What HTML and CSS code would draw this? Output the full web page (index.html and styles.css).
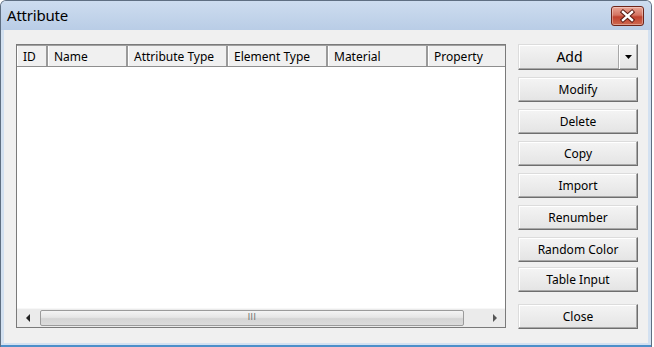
FILE: index.html
```html
<!DOCTYPE html>
<html>
<head>
<meta charset="utf-8">
<link rel="stylesheet" href="styles.css">
</head>
<body>
<div class="window">
  <div class="titlebar">
    <span class="title">Attribute</span>
    <div class="close-x">
      <svg width="33" height="20" viewBox="0 0 33 20">
        <path d="M12 6 L21 14 M21 6 L12 14" stroke="#5a1a12" stroke-width="4.4" stroke-linecap="square"/>
        <path d="M12 6 L21 14 M21 6 L12 14" stroke="#ffffff" stroke-width="2.4" stroke-linecap="square"/>
      </svg>
    </div>
  </div>
  <div class="frame">
    <div class="client">
      <div class="listview">
        <div class="header">
          <div class="hcell c-id">ID</div>
          <div class="hcell c-name">Name</div>
          <div class="hcell c-wide">Attribute Type</div>
          <div class="hcell c-wide">Element Type</div>
          <div class="hcell c-wide">Material</div>
          <div class="hcell c-last">Property</div>
        </div>
        <div class="body"></div>
        <div class="hscroll">
          <div class="arrow">
            <svg width="5" height="8" viewBox="0 0 5 8"><path d="M4 0 L0 4 L4 8 Z" fill="#222"/></svg>
          </div>
          <div class="track">
            <div class="thumb"><span class="grip">III</span></div>
          </div>
          <div class="arrow">
            <svg width="5" height="8" viewBox="0 0 5 8"><path d="M1 0 L5 4 L1 8 Z" fill="#555"/></svg>
          </div>
        </div>
      </div>
      <div class="buttons">
        <div class="btn split">
          <span class="split-main">Add</span>
          <span class="split-arrow"><svg width="7" height="4" viewBox="0 0 7 4"><path d="M0 0 L7 0 L3.5 4 Z" fill="#000"/></svg></span>
        </div>
        <div class="btn">Modify</div>
        <div class="btn">Delete</div>
        <div class="btn">Copy</div>
        <div class="btn">Import</div>
        <div class="btn">Renumber</div>
        <div class="btn">Random Color</div>
        <div class="btn btn-last">Table Input</div>
        <div class="btn btn-close">Close</div>
      </div>
    </div>
  </div>
</div>
</body>
</html>
```
FILE: styles.css
```css
* { box-sizing: border-box; }
html, body {
  margin: 0;
  padding: 0;
  background: #ffffff;
}
body {
  font-family: "Noto Sans", "Open Sans", sans-serif;
  font-size: 12px;
  color: #000;
}
.window {
  width: 652px;
  height: 347px;
  display: flex;
  flex-direction: column;
  border: 1px solid #5f6f82;
  border-bottom: none;
  border-radius: 6px 6px 0 0;
  background: #c9daee;
  overflow: hidden;
}
.titlebar {
  height: 29px;
  flex: none;
  display: flex;
  align-items: center;
  justify-content: space-between;
  padding: 0 7px 2px 6px;
  background: linear-gradient(#cddcef, #b9cde6);
}
.title {
  font-size: 15px;
  color: #000;
  letter-spacing: -0.2px;
}
.close-x {
  width: 33px;
  height: 20px;
  margin-top: 2px;
  border: 1px solid #6e2418;
  border-radius: 3px;
  background: linear-gradient(#e9a595 0%, #d47462 45%, #c0412e 55%, #cf6a50 100%);
  box-shadow: inset 0 0 0 1px rgba(255,255,255,0.35);
  display: flex;
  align-items: center;
  justify-content: center;
}
.close-x svg { display: block; margin: -1px; }
.frame {
  flex: 1;
  display: flex;
  padding: 0 3px 2px 3px;
  background: #d3e1f1;
  border-bottom: 2px solid #4d8fc9;
}
.client {
  flex: 1;
  display: flex;
  align-items: flex-start;
  gap: 12px;
  padding: 14px 9px 0 12px;
  background: #f0f0f0;
}
.listview {
  width: 490px;
  height: 284px;
  display: flex;
  flex-direction: column;
  border: 1px solid #7a7a7a;
  background: #ffffff;
}
.header {
  height: 22px;
  flex: none;
  display: flex;
  background: #f0f0f0;
  border-top: 1px solid #a0a0a0;
  border-bottom: 1px solid #8e8e8e;
}
.hcell {
  display: flex;
  align-items: center;
  padding-left: 5px;
  padding-top: 1px;
  border-left: 1px solid #ffffff;
  border-right: 2px solid #9a9a9a;
  white-space: nowrap;
  line-height: 1;
}
.c-id { width: 31px; }
.c-name { width: 80px; }
.c-wide { width: 100px; }
.c-last { flex: 1; border-right: none; }
.body {
  flex: 1;
  background: #ffffff;
}
.hscroll {
  height: 19px;
  flex: none;
  display: flex;
  align-items: stretch;
  background: #ebebeb;
  border-top: 1px solid #f7f7f7;
}
.arrow {
  width: 22px;
  display: flex;
  align-items: center;
  justify-content: center;
}
.track {
  flex: 1;
  display: flex;
  padding: 1px 0;
}
.thumb {
  width: 424px;
  margin-left: 1px;
  border: 1px solid #9b9b9b;
  border-radius: 2px;
  background: linear-gradient(#f4f4f4 0%, #e6e6e6 45%, #d4d4d4 55%, #dcdcdc 100%);
  display: flex;
  align-items: center;
  justify-content: center;
}
.grip {
  font-family: "DejaVu Sans", sans-serif;
  font-size: 8px;
  color: #6a6a6a;
  letter-spacing: 0.5px;
  line-height: 1;
}
.buttons {
  width: 120px;
  height: 285px;
  display: flex;
  flex-direction: column;
  gap: 7px;
}
.btn {
  height: 25px;
  flex: none;
  display: flex;
  align-items: center;
  justify-content: center;
  padding-bottom: 1px;
  border: 1px solid;
  border-color: #dcdcdc #6e6e6e #6e6e6e #dcdcdc;
  box-shadow: inset -1px -1px 0 #a8a8a8, inset 1px 1px 0 #ffffff;
  background: linear-gradient(#f4f4f4, #e4e4e4);
  white-space: nowrap;
}
.btn-last {
  margin-top: -2px;
}
.btn-close {
  margin-top: auto;
}
.split {
  height: 26px;
  justify-content: stretch;
  padding: 0;
}
.split-main {
  flex: 1;
  text-align: center;
  font-size: 14px;
  padding-left: 2px;
  padding-bottom: 1px;
}
.split-arrow {
  width: 19px;
  align-self: stretch;
  display: flex;
  align-items: center;
  justify-content: center;
  border-left: 1px solid #a8a8a8;
  box-shadow: inset 1px 0 0 #ffffff;
}
```
